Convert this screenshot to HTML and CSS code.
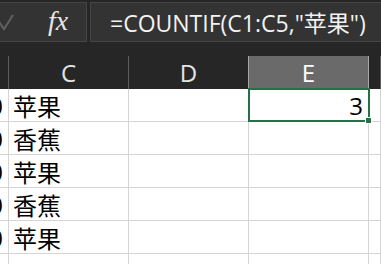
FILE: index.html
```html
<!DOCTYPE html>
<html>

<head>
    <meta charset="utf-8">
    <title>COUNTIF</title>
    <link rel="stylesheet" href="styles.css">
</head>

<body>
    <div class="sheet">
        <div class="topbar">
            <div class="fxbox">
                <svg class="check" width="14" height="18" viewBox="0 0 14 18">
                    <path d="M-1 9 L4 16 L13 2" fill="none" stroke="#5e5e5e" stroke-width="2.2" />
                </svg>
                <span class="fx">fx</span>
            </div>
            <div class="formula">=COUNTIF(C1:C5,"苹果")</div>
        </div>

        <div class="grid">
            <div class="head"></div>
            <div class="head">C</div>
            <div class="head">D</div>
            <div class="head active">E</div>
            <div class="head"></div>

            <div class="cell num">0</div>
            <div class="cell">苹果</div>
            <div class="cell"></div>
            <div class="cell selected"><span>3</span>
                <div class="selbox"><div class="handle"></div></div>
            </div>
            <div class="cell"></div>

            <div class="cell num">0</div>
            <div class="cell">香蕉</div>
            <div class="cell"></div>
            <div class="cell"></div>
            <div class="cell"></div>

            <div class="cell num">0</div>
            <div class="cell">苹果</div>
            <div class="cell"></div>
            <div class="cell"></div>
            <div class="cell"></div>

            <div class="cell num">0</div>
            <div class="cell">香蕉</div>
            <div class="cell"></div>
            <div class="cell"></div>
            <div class="cell"></div>

            <div class="cell num">0</div>
            <div class="cell">苹果</div>
            <div class="cell"></div>
            <div class="cell"></div>
            <div class="cell"></div>

            <div class="cell num"></div>
            <div class="cell"></div>
            <div class="cell"></div>
            <div class="cell"></div>
            <div class="cell"></div>
        </div>
    </div>
</body>

</html>
```

FILE: styles.css
```css
* {
    padding: 0;
    margin: 0;
    box-sizing: border-box;
}

body {
    background: #262626;
    font-family: "Open Sans", "Noto Sans CJK SC", sans-serif;
    overflow: hidden;
}

.sheet {
    height: 264px;
    overflow: hidden;
}

.topbar {
    display: flex;
    gap: 3px;
    padding-top: 2px;
    height: 56px;
}

.fxbox,
.formula {
    height: 40px;
    background: #333333;
    border: 1px solid #464646;
    display: flex;
    align-items: center;
}

.fxbox {
    width: 87px;
    border-left: none;
}

.check {
    margin-left: 0;
}

.fx {
    margin-left: 34px;
    font-family: "Liberation Serif", serif;
    font-style: italic;
    font-size: 28px;
    color: #e6e6e6;
    line-height: 1;
    margin-top: -2px;
}

.formula {
    flex: 1;
    border-right: none;
    padding-left: 19px;
    font-size: 23px;
    color: #f2f2f2;
    white-space: nowrap;
}

.grid {
    display: grid;
    grid-template-columns: 9px 120px 120px 120px 1fr;
    grid-auto-rows: 33px;
}

.head {
    display: flex;
    align-items: center;
    justify-content: center;
    border-right: 1px solid #5c5c5c;
    font-size: 24px;
    color: #e4e4e4;
}

.head.active {
    background: #6a6a6a;
    border-left: 1px solid #a6a6a6;
    border-right: 1px solid #a6a6a6;
    color: #ffffff;
    margin-left: -1px;
}

.cell {
    display: flex;
    align-items: center;
    background: #ffffff;
    border-right: 1px solid #d4d4d4;
    border-bottom: 1px solid #d4d4d4;
    padding: 0 4px;
    font-size: 24px;
    color: #000000;
    white-space: nowrap;
    overflow: hidden;
}

.cell.num {
    justify-content: flex-end;
    padding: 0 5px 0 0;
}

.cell.selected {
    position: relative;
    justify-content: flex-end;
    padding-right: 5px;
    overflow: visible;
}

.selbox {
    position: absolute;
    top: -1px;
    left: -1px;
    right: -2px;
    bottom: -1px;
    border: 2px solid #217346;
}

.handle {
    position: absolute;
    right: -4px;
    bottom: -4px;
    width: 7px;
    height: 7px;
    background: #217346;
    border: 1px solid #ffffff;
}
```
